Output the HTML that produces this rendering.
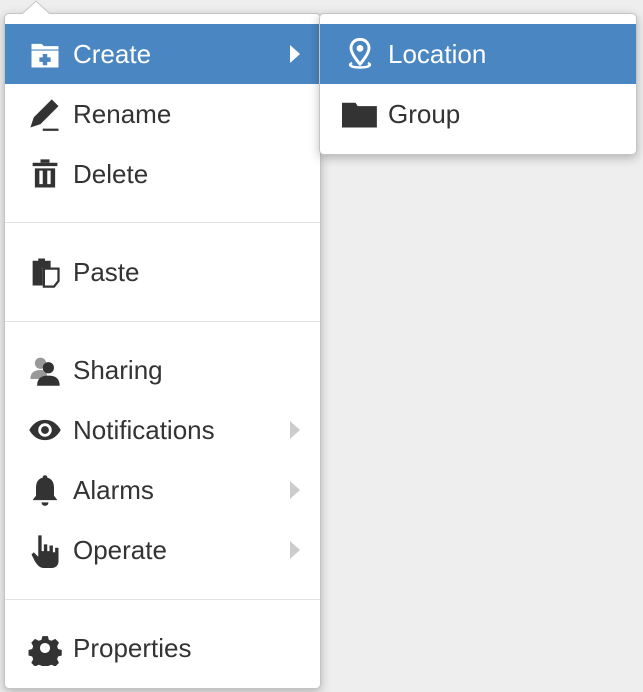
<!DOCTYPE html>
<html><head><style>
html,body{margin:0;padding:0;width:643px;height:692px;background:#eeeeee;overflow:hidden;font-family:"Liberation Sans",sans-serif;}
.menu{position:absolute;background:#fff;border:1px solid #c4c4c4;border-radius:5px;box-shadow:0 3px 10px rgba(0,0,0,0.25);}
.item{position:absolute;left:0;right:0;height:60px;line-height:60px;font-size:26px;color:#333;}
.item.on{background:#4a86c1;color:#fff;}
.item .t{position:absolute;left:68px;top:0px;}
.item svg.i{position:absolute;left:22px;top:12px;width:36px;height:36px;}
.arr{position:absolute;right:20px;top:21px;width:0;height:0;border-top:9px solid transparent;border-bottom:9px solid transparent;border-left:10px solid #ccc;}
.on .arr{border-left-color:#fff;}
.div{position:absolute;left:0;right:0;height:1px;background:#e2e2e2;}
</style></head><body>
<div class="menu" style="left:4px;top:13px;width:315px;height:674px;">
 <div class="item on" style="top:10px;"><svg class="i" viewBox="0 0 32 32"><path d="M4 7h9l2 2h13v3H4z M4 13h24v15H4z" fill="#fff"/><path d="M14 16h4v3h3v4h-3v3h-4v-3h-3v-4h3z" fill="#4a86c1"/></svg><span class="t">Create</span><div class="arr"></div></div>
 <div class="item" style="top:70px;"><svg class="i" viewBox="0 0 32 32"><path d="M22 3l6 6-16 16-9 3 3-9z" fill="#333"/><rect x="14" y="29" width="14" height="2" fill="#333"/></svg><span class="t">Rename</span></div>
 <div class="item" style="top:130px;"><svg class="i" viewBox="0 0 32 32"><rect x="12" y="3" width="8" height="3" fill="#333"/><rect x="5" y="6" width="22" height="3" fill="#333"/><path d="M7 11h18v17H7z" fill="#333"/><rect x="11" y="13" width="3" height="12" fill="#fff"/><rect x="18" y="13" width="3" height="12" fill="#fff"/></svg><span class="t">Delete</span></div>
 <div class="div" style="top:208px;"></div>
 <div class="item" style="top:228px;"><svg class="i" viewBox="0 0 32 32"><path d="M5 6h5V4h6v2h5v6h-7v16H5z" fill="#333"/><path d="M15 13h13v11l-4 5h-9z" fill="#fff" stroke="#333" stroke-width="2"/></svg><span class="t">Paste</span></div>
 <div class="div" style="top:307px;"></div>
 <div class="item" style="top:326px;"><svg class="i" viewBox="0 0 32 32"><circle cx="12" cy="10" r="5" fill="#999"/><path d="M3 24c0-6 4-8 9-8s6 2 6 8z" fill="#999"/><circle cx="19" cy="14" r="5" fill="#333"/><path d="M9 30c0-7 4-9 10-9s10 2 10 9z" fill="#333"/></svg><span class="t">Sharing</span></div>
 <div class="item" style="top:386px;"><svg class="i" viewBox="0 0 32 32"><path d="M2 16C6 9 11 7 16 7s10 2 14 9c-4 7-9 9-14 9S6 23 2 16z" fill="#333"/><circle cx="16" cy="16" r="6" fill="#fff"/><circle cx="16" cy="16" r="3.5" fill="#333"/></svg><span class="t">Notifications</span><div class="arr"></div></div>
 <div class="item" style="top:446px;"><svg class="i" viewBox="0 0 32 32"><path d="M16 3c-2 0-2 1-2 2-4 1-6 4-6 9v7l-3 4h22l-3-4v-7c0-5-2-8-6-9 0-1 0-2-2-2z" fill="#333"/><path d="M13 27h6c0 2-1 3-3 3s-3-1-3-3z" fill="#333"/></svg><span class="t">Alarms</span><div class="arr"></div></div>
 <div class="item" style="top:506px;"><svg class="i" viewBox="0 0 32 32"><path d="M10 3h3v14h2v-6h3v6h2v-5h3v6h2v-4h3v12c0 4-3 6-6 6h-7c-4 0-6-3-8-6l-3-6 2-2 4 4z" fill="#333"/></svg><span class="t">Operate</span><div class="arr"></div></div>
 <div class="div" style="top:585px;"></div>
 <div class="item" style="top:604px;"><svg class="i" viewBox="0 0 32 32"><path d="M13 3h6l1 4 3 1 4-2 4 4-2 4 1 3 4 1v6l-4 1-1 3 2 4-4 4-4-2-3 1-1 4h-6l-1-4-3-1-4 2-4-4 2-4-1-3-4-1v-6l4-1 1-3-2-4 4-4 4 2 3-1z" fill="#333" transform="translate(3,3) scale(0.82)"/><circle cx="16" cy="16" r="4.5" fill="#fff"/></svg><span class="t">Properties</span></div>
</div>
<svg style="position:absolute;left:22px;top:0;" width="28" height="15"><path d="M0 14L14 1 28 14" fill="#fff" stroke="#c4c4c4" stroke-width="1"/><rect x="0" y="14" width="28" height="2" fill="#fff"/></svg>
<div class="menu" style="left:319px;top:13px;width:316px;height:140px;">
 <div class="item on" style="top:10px;"><svg class="i" viewBox="0 0 32 32"><path d="M16 3c-5 0-8 3.5-8 8 0 5 8 14 8 14s8-9 8-14c0-4.5-3-8-8-8z" fill="none" stroke="#fff" stroke-width="2.6"/><circle cx="16" cy="11" r="3" fill="#fff"/><path d="M9 24c-3 1-3 4 7 4s10-3 7-4" fill="none" stroke="#fff" stroke-width="2.2"/></svg><span class="t">Location</span></div>
 <div class="item" style="top:70px;"><svg class="i" viewBox="0 0 32 32"><path d="M0 6h12l2 3h17v19H0z" fill="#333"/></svg><span class="t">Group</span></div>
</div>
</body></html>
